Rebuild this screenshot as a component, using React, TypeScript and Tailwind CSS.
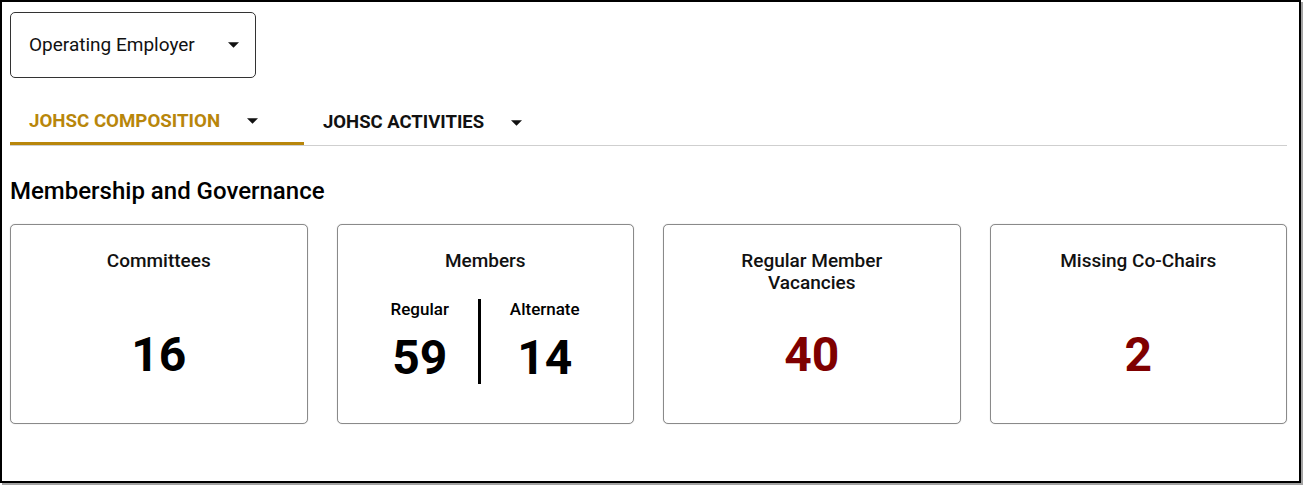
import React from "react"

function Caret() {
  return (
    <svg width="11" height="6" viewBox="0 0 10 5" className="shrink-0">
      <path d="M0 0 L10 0 L5 5 Z" fill="#111" />
    </svg>
  )
}

function Card({ title, children }: { title: React.ReactNode; children: React.ReactNode }) {
  return (
    <div className="flex h-[200px] flex-col items-center rounded-[5px] border border-[#8a8a8a] bg-white shadow-[0_0_1px_#bbb]">
      <div className="mt-[25px] h-[44px] text-center text-[19px] leading-[22px] font-medium text-[#111]">{title}</div>
      {children}
    </div>
  )
}

function BigNumber({ value, red }: { value: string; red?: boolean }) {
  return (
    <div className={`mt-[35px] text-[48px] leading-[52px] font-bold ${red ? "text-[#7f0000]" : "text-black"}`}>
      {value}
    </div>
  )
}

export default function App() {
  return (
    <div className="h-[488px] w-[1304px] bg-white font-['Roboto',sans-serif]">
      <div className="h-[483px] w-[1301px] border-2 border-black px-2 pt-[10px] shadow-[2px_2px_0_#a3a3a3]">
        <button className="flex h-[66px] w-[246px] items-center justify-between rounded-[5px] border border-[#333] pr-[16px] pl-[18px] text-[19px] text-[#111]">
          <span>Operating Employer</span>
          <Caret />
        </button>

        <div className="mt-[22px] flex w-[1277px] border-b border-[#cfcfcf]">
          <div className="mb-[-1px] flex h-[45px] w-[294px] items-center gap-[27px] border-b-[3px] border-[#b8860b] pl-[19px]">
            <span className="text-[18.7px] font-bold text-[#b8860b]">JOHSC COMPOSITION</span>
            <Caret />
          </div>
          <div className="flex h-[45px] items-center gap-[27px] pl-[19px]">
            <span className="text-[18.5px] font-bold text-[#111]">JOHSC ACTIVITIES</span>
            <Caret />
          </div>
        </div>

        <h2 className="mt-[30px] text-[24px] leading-[30px] font-medium text-black">Membership and Governance</h2>

        <div className="mt-[18px] grid w-[1277px] grid-cols-4 gap-[29px]">
          <Card title="Committees">
            <BigNumber value="16" />
          </Card>

          <Card title="Members">
            <div className="mt-[5px] flex">
              <div className="flex w-[116px] flex-col items-center">
                <div className="text-[17px] leading-[20px] font-medium">Regular</div>
                <div className="mt-[13px] text-[48px] leading-[52px] font-bold">59</div>
              </div>
              <div className="w-[3px] self-stretch bg-black" />
              <div className="flex w-[128px] flex-col items-center">
                <div className="text-[17px] leading-[20px] font-medium">Alternate</div>
                <div className="mt-[13px] text-[48px] leading-[52px] font-bold">14</div>
              </div>
            </div>
          </Card>

          <Card
            title={
              <>
                Regular Member
                <br />
                Vacancies
              </>
            }
          >
            <BigNumber value="40" red />
          </Card>

          <Card title="Missing Co-Chairs">
            <BigNumber value="2" red />
          </Card>
        </div>
      </div>
    </div>
  )
}
